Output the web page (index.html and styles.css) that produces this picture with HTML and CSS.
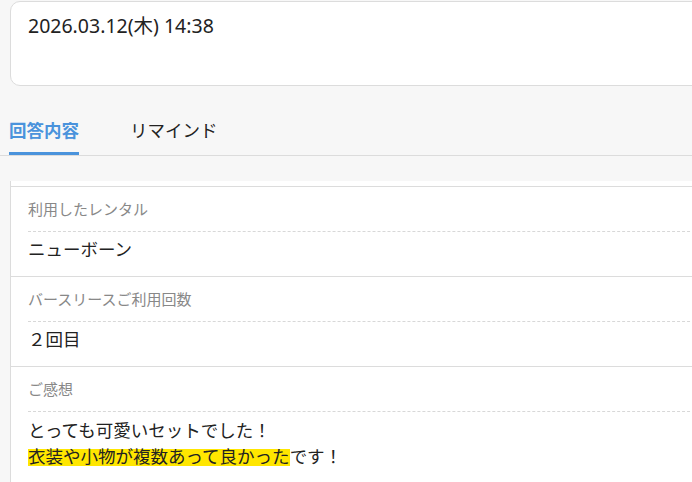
FILE: index.html
```html
<!DOCTYPE html>
<html lang="ja">
<head>
<meta charset="utf-8">
<link rel="stylesheet" href="styles.css">
</head>
<body>
<div class="page">
  <div class="card">
    <div class="date">2026.03.12(木) 14:38</div>
  </div>
  <div class="tabs">
    <div class="tab active">回答内容</div>
    <div class="tab">リマインド</div>
  </div>
  <div class="panel">
    <div class="item">
      <div class="label">利用したレンタル</div>
      <div class="value">ニューボーン</div>
    </div>
    <div class="item">
      <div class="label">バースリースご利用回数</div>
      <div class="value">２回目</div>
    </div>
    <div class="item">
      <div class="label">ご感想</div>
      <div class="value text">とっても可愛いセットでした！<br><span class="marker">衣装や小物が複数あって良かった</span>です！</div>
    </div>
  </div>
</div>
</body>
</html>
```
FILE: styles.css
```css
html, body {
  margin: 0;
  padding: 0;
  background: #f7f7f7;
  overflow: hidden;
}
body {
  font-family: "Noto Sans CJK JP", "Noto Sans", sans-serif;
  color: #222;
}
.page {
  width: 720px;
}
.card {
  margin: 1px 0 0 10px;
  box-sizing: border-box;
  height: 85px;
  background: #fff;
  border: 1px solid #dcdcdc;
  border-radius: 10px;
  padding: 12px 17px;
}
.date {
  font-family: "Noto Sans", "Noto Sans CJK JP", sans-serif;
  font-size: 19.5px;
  line-height: 24px;
  color: #222;
}
.tabs {
  display: flex;
  gap: 51px;
  padding-left: 9px;
  border-bottom: 1px solid #dcdcdc;
}
.tab {
  font-size: 17.5px;
  line-height: 24px;
  padding: 32px 0 10px;
  border-bottom: 3px solid transparent;
  color: #222;
}
.tab.active {
  color: #4a93dc;
  font-weight: bold;
  border-bottom-color: #4a93dc;
}
.panel {
  margin: 25px 0 0 10px;
  background: #fff;
  border-left: 1px solid #dcdcdc;
  padding-top: 5px;
}
.item {
  border-top: 1px solid #dcdcdc;
}
.label {
  margin-left: 17px;
  padding: 12px 0;
  font-size: 15px;
  line-height: 20px;
  color: #888;
  border-bottom: 1px dashed #d8d8d8;
}
.value {
  padding: 5px 17px 15px;
  font-size: 17.5px;
  line-height: 24px;
}
.value.text {
  line-height: 26px;
}
.marker {
  background: linear-gradient(to bottom, transparent 24%, #ffe600 24%, #ffe600 93%, transparent 93%);
}
```
